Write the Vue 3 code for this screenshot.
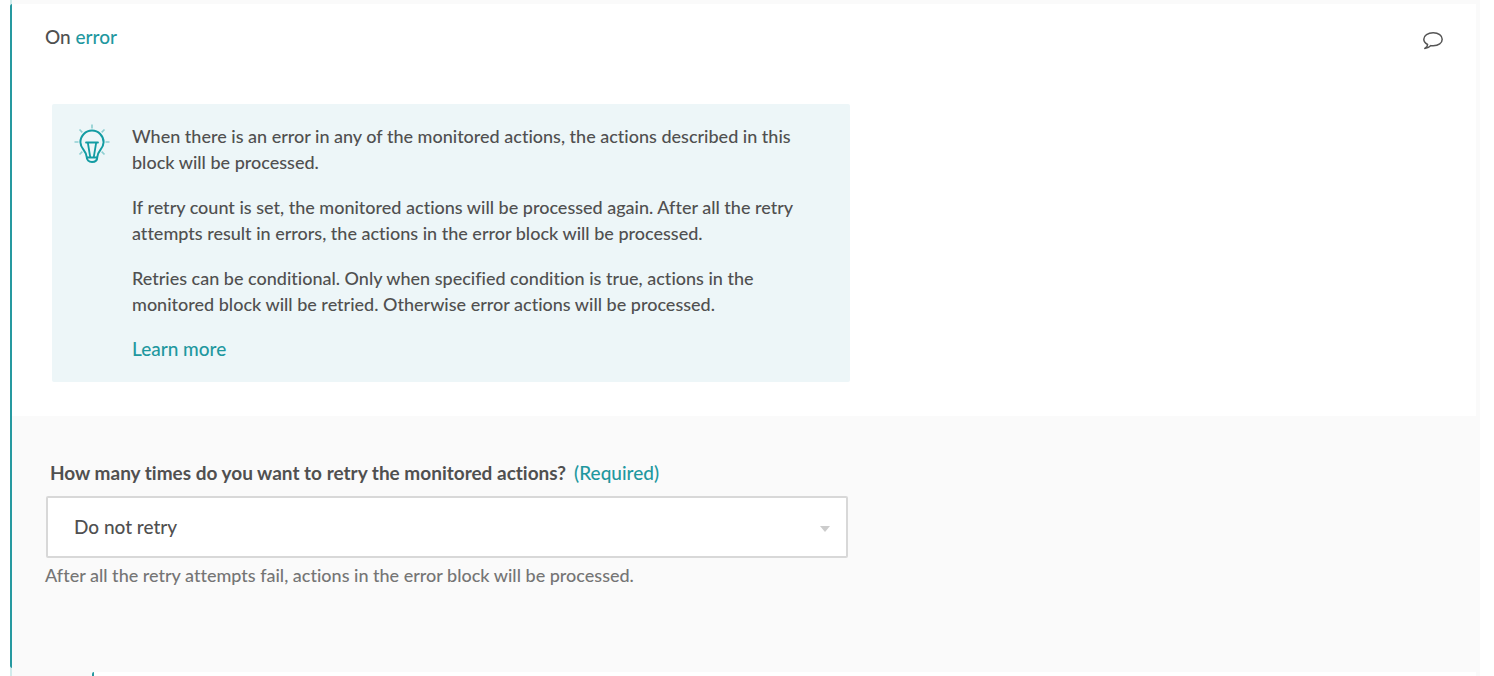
<script setup>
import { ref } from 'vue'

const retry = ref('none')
const options = [
  { value: 'none', label: 'Do not retry' },
  { value: 'once', label: 'Retry once' },
  { value: 'twice', label: 'Retry twice' },
  { value: 'three', label: 'Retry three times' },
]
</script>

<template>
  <main class="page">
    <div class="connector connector-top"></div>
    <section class="block">
      <div class="panel">
        <header class="head">
          <h1 class="title">On <span class="accent">error</span></h1>
          <button class="comment" type="button" aria-label="Add comment">
            <svg width="20" height="18" viewBox="0 0 20 18" fill="none" stroke="#555" stroke-width="1.5" stroke-linejoin="round">
              <path d="M4.6 12.5C2 11.2.8 9.4.8 7.3.8 3.5 4.9.8 10.2.8s9 2.700 9 6.500-3.700 6.500-9 6.500c-.8 0-1.600 0-2.300-.2-1.400 1.500-3.400 2.900-6.100 2.900 1.700-1.100 2.900-2.600 2.800-4z" />
            </svg>
          </button>
        </header>
        <aside class="tip">
          <svg class="bulb" width="36" height="40" viewBox="0 0 36 40" fill="none" stroke="#139ca3" stroke-width="2" stroke-linecap="round" stroke-linejoin="round">
            <g stroke="#8fd0d2" stroke-linecap="butt" stroke-width="1.700">
              <path d="M18 .5v4M.5 18h4M31.500 18h4M5.500 5.500l2.800 2.800M30.500 5.500l-2.800 2.800M5.500 30.500l2.800-2.800M30.500 30.500l-2.800-2.800" />
            </g>
            <path d="M12.700 33C12.700 26.500 6.400 25 6.400 18.200a11.600 11.600 0 0 1 23.200 0C29.600 25 23.300 26.500 23.300 33c0 3-2.100 5-5.300 5s-5.300-2-5.300-5z" />
            <path d="M13 33.500h10" />
            <path stroke-width="1.800" d="M12 18.500h12M13.800 18.500l2.400 14.500M22.200 18.500l-2.400 14.500" />
          </svg>
          <div class="tip-text">
            <p>When there is an error in any of the monitored actions, the actions described in this block will be processed.</p>
            <p>If retry count is set, the monitored actions will be processed again. After all the retry attempts result in errors, the actions in the error block will be processed.</p>
            <p>Retries can be conditional. Only when specified condition is true, actions in the monitored block will be retried. Otherwise error actions will be processed.</p>
            <a class="accent" href="#">Learn more</a>
          </div>
        </aside>
      </div>
      <form class="settings" @submit.prevent>
        <label class="label" for="retry"><strong>How many times do you want to retry the monitored actions?</strong><span class="accent">(Required)</span></label>
        <div class="select-wrap">
          <select id="retry" v-model="retry" class="select" aria-describedby="retry-help">
            <option v-for="o in options" :key="o.value" :value="o.value">{{ o.label }}</option>
          </select>
          <svg class="caret" width="10" height="6" viewBox="0 0 10 6"><path d="M0 0h10L5 6z" fill="#ccc" /></svg>
        </div>
        <p id="retry-help" class="help">After all the retry attempts fail, actions in the error block will be processed.</p>
      </form>
    </section>
    <div class="connector connector-bottom">
      <div class="next-block"></div>
    </div>
  </main>
</template>

<style>
body {
  margin: 0;
  background: #fff;
}
</style>

<style scoped>
.page {
  box-sizing: border-box;
  padding: 0 14px 0 10px;
  font-family: Lato, "Liberation Sans", sans-serif;
  font-size: 19px;
  font-weight: 500;
  font-variant-ligatures: none;
  line-height: 26px;
  color: #505050;
}
.connector {
  box-sizing: border-box;
  background: #fafafa;
  border-left: 2px solid #d0ebeb;
}
.connector-top {
  height: 4px;
}
.connector-bottom {
  padding: 4px 4px 0 80px;
}
.next-block {
  height: 4px;
  background: #fff;
  border-left: 2px solid #2699a0;
  border-top-left-radius: 2px;
}
.block {
  background: #fafafa;
  border-left: 2px solid #2699a0;
  border-radius: 2px 0 0 2px;
}
.panel {
  margin-right: 4px;
  padding: 20px 33px 34px;
  background: #fff;
}
.head {
  display: flex;
  justify-content: space-between;
  align-items: flex-start;
  margin-bottom: 54px;
}
.title {
  margin: 0;
  font-size: 19px;
  font-weight: 500;
}
.accent {
  color: #1f989f;
  text-decoration: none;
}
.comment {
  display: flex;
  padding: 8px 0 0;
  border: 0;
  background: none;
  cursor: pointer;
}
.tip {
  box-sizing: border-box;
  display: flex;
  gap: 22px;
  max-width: 798px;
  margin-left: 7px;
  padding: 19px 36px 20px 22px;
  background: #edf6f8;
  border-radius: 2px;
}
.bulb {
  flex: none;
  margin-top: 1px;
}
.tip-text {
  display: grid;
  gap: 19px;
  justify-items: start;
}
.tip-text p {
  margin: 0;
  font-size: 18px;
}
.settings {
  padding: 44px 33px 80px;
}
.label {
  display: flex;
  gap: 8px;
  margin: 0 0 10px 5px;
}
.select-wrap {
  position: relative;
  max-width: 802px;
  margin-left: 1px;
}
.select {
  display: block;
  box-sizing: border-box;
  width: 100%;
  height: 62px;
  padding: 0 40px 0 26px;
  border: 2px solid #d8d8d8;
  border-radius: 2px;
  background: #fff;
  color: inherit;
  font: inherit;
  appearance: none;
}
.caret {
  position: absolute;
  right: 18px;
  top: 30px;
  pointer-events: none;
}
.help {
  margin: 4px 0 0;
  font-size: 18px;
  color: #757575;
}
</style>
